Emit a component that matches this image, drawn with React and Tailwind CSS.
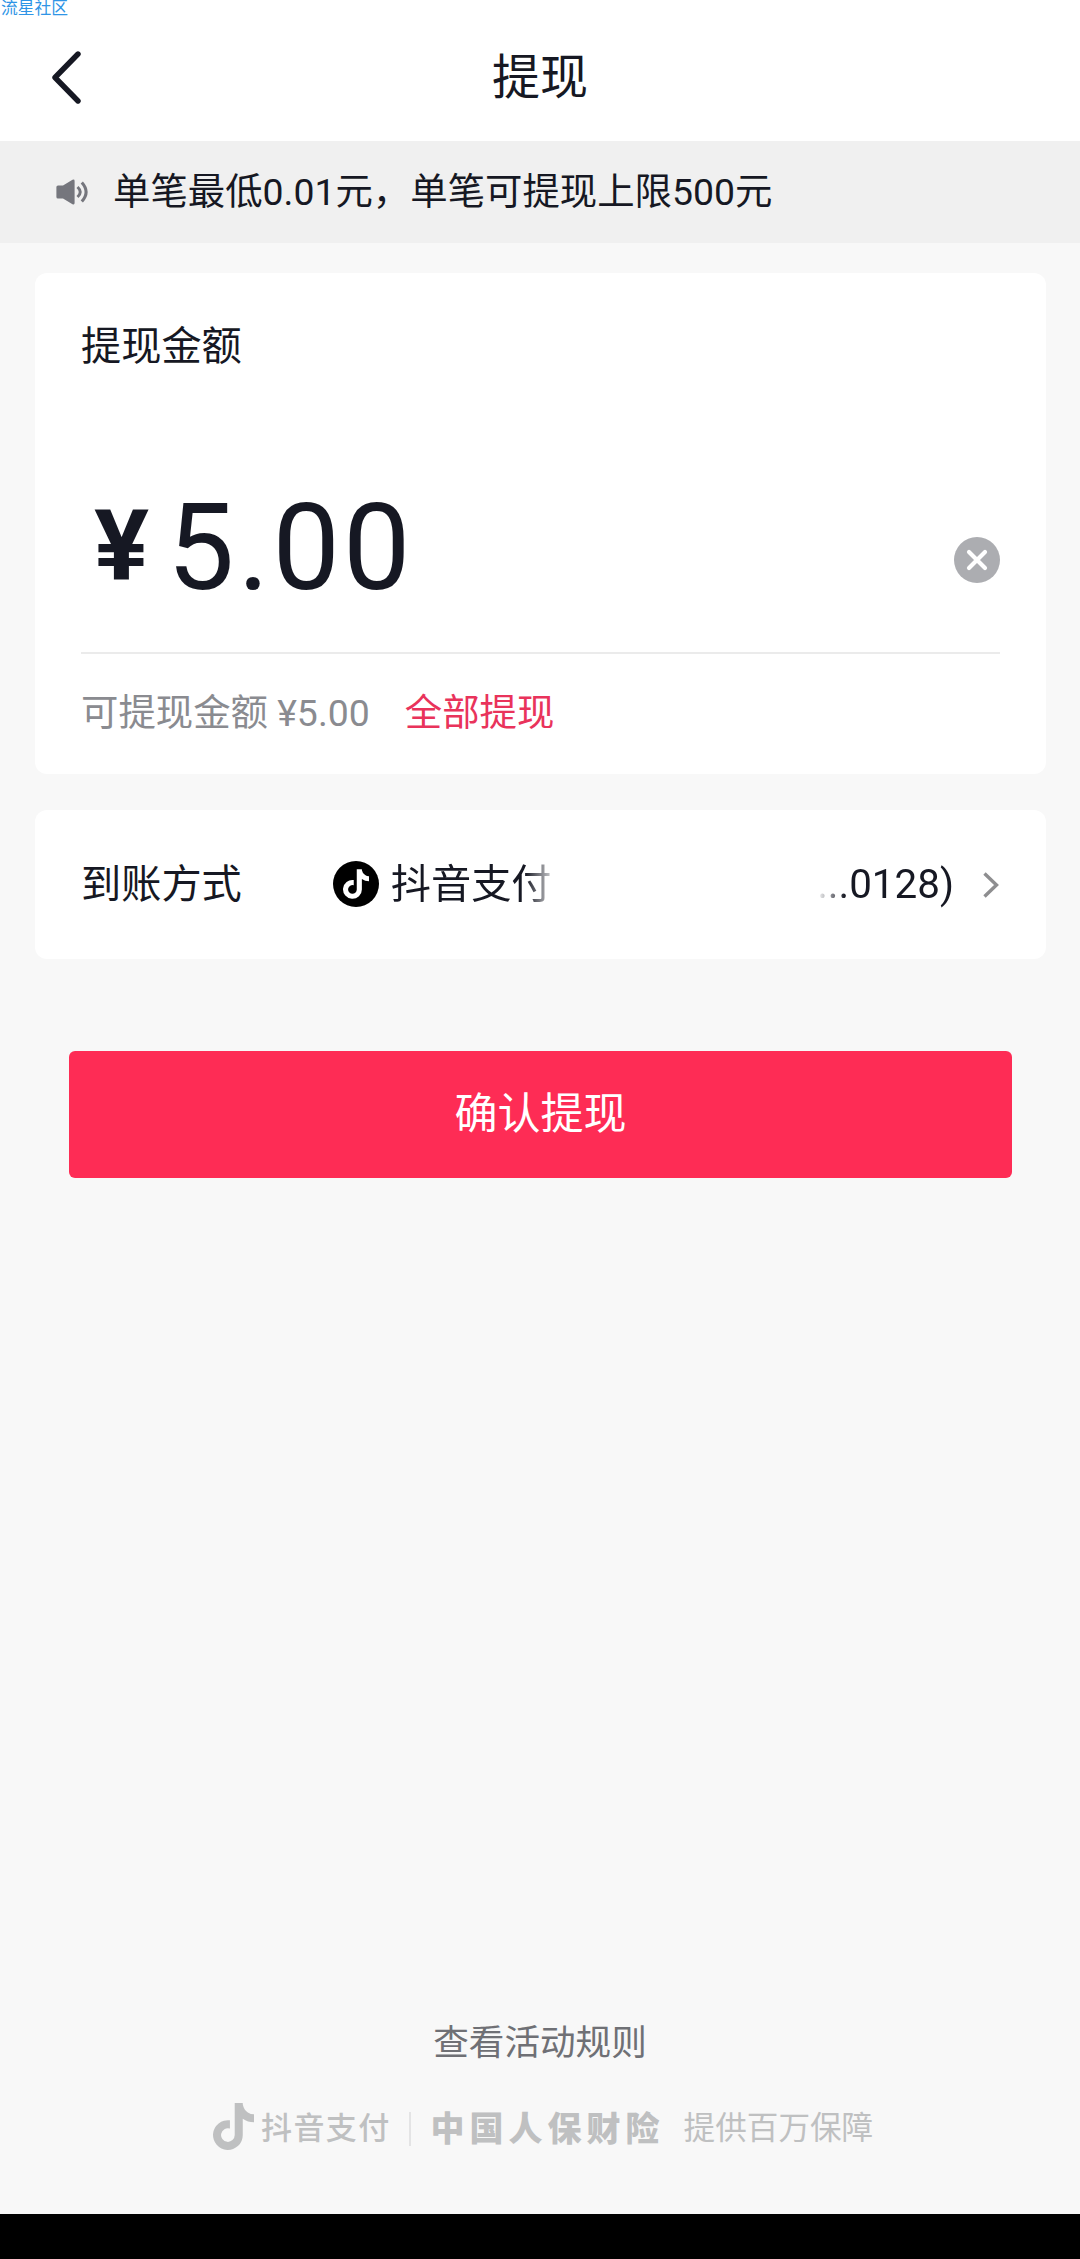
const NOTE_PATH =
  "M448,209.91a210.06,210.06,0,0,1-122.77-39.25V349.38A162.55,162.55,0,1,1,185,188.31V278.2a74.62,74.62,0,1,0,52.23,71.18V0l88,0a121.18,121.18,0,0,0,1.86,22.17h0A122.18,122.18,0,0,0,381,102.39a121.43,121.43,0,0,0,67,20.14Z";

const NoteIcon = ({ className }) => (
  <svg viewBox="0 0 448 512" fill="currentColor" className={className}>
    <path d={NOTE_PATH} />
  </svg>
);

const SpeakerIcon = () => (
  <svg width="32" height="26" viewBox="0 0 32 26" fill="none">
    <path
      d="M2 6.5H7L16.5 0.8Q18.6 0 18.6 2V24Q18.6 26 16.5 25.2L7 19.5H2Q0.4 19.5 0.4 18V8Q0.4 6.5 2 6.5Z"
      fill="#75767d"
    />
    <path
      d="M21.5 8Q27 13 21.5 18M25.8 3.4Q34.4 13 25.8 22.6"
      stroke="#75767d"
      strokeWidth="3"
    />
  </svg>
);

const Header = () => (
  <header className="flex h-[141px] items-center bg-white pl-[51px]">
    <button type="button" className="mt-[13px] w-8">
      <svg width="32" height="54" viewBox="0 0 32 54" fill="none">
        <path
          d="M27 4L4 27.500L27 51"
          stroke="#161823"
          strokeWidth="5.400"
          strokeLinecap="round"
          strokeLinejoin="round"
        />
      </svg>
    </button>
    <h1 className="mt-[14px] mr-[83px] flex-1 text-center text-[48px] leading-[64px]">
      提现
    </h1>
  </header>
);

const Notice = () => (
  <div className="flex h-[102px] items-center bg-[#f0f0f0] pl-14">
    <SpeakerIcon />
    <p className="ml-[25px] text-[37.4px] leading-[50px]">
      单笔最低0.01元，单笔可提现上限500元
    </p>
  </div>
);

const AmountCard = () => (
  <section className="mt-[30px] h-[501px] rounded-[12px] bg-white px-[46px] pt-[47px]">
    <h2 className="text-[40.2px] leading-[54px]">提现金额</h2>
    <div className="mt-[79px] flex h-[201px] items-start justify-between border-b-2 border-[#ebebeb]">
      <div className="flex items-baseline pl-[13px]">
        <span className="mr-[15px] w-[58px] origin-left -translate-y-[9px] scale-x-105 text-[98px] leading-[190px] font-bold">
          ¥
        </span>
        <span className="text-[120px] leading-[190px] tracking-[3.2px]">
          5.00
        </span>
      </div>
      <button type="button" className="mt-[84px]">
        <svg width="46" height="46" viewBox="0 0 46 46">
          <circle cx="23" cy="23" r="23" fill="#acadb1" />
          <path
            d="M15 15L31 31M31 15L15 31"
            stroke="#fff"
            strokeWidth="4.200"
            strokeLinecap="round"
          />
        </svg>
      </button>
    </div>
    <p className="mt-[34px] flex text-[37.4px] leading-[50px] text-[#8a8b90]">
      <span>可提现金额 ¥5.00</span>
      <span className="ml-[35px] text-[#e9335b]">全部提现</span>
    </p>
  </section>
);

const MethodCard = () => (
  <section className="mt-9 flex h-[149px] items-center rounded-[12px] bg-white pr-[47px] pl-[46px] text-[40.2px] leading-[54px]">
    <span>到账方式</span>
    <span className="mb-[2px] ml-[91px] flex h-[46px] w-[46px] items-center justify-center rounded-full bg-black text-white">
      <NoteIcon className="h-[30px] w-[26px]" />
    </span>
    <span className="ml-[12px] [mask-image:linear-gradient(to_right,#000_134px,transparent_168px)]">
      抖音支付
    </span>
    <span className="ml-auto text-[40.4px] [mask-image:linear-gradient(to_right,transparent,#000_28px)]">
      ...0128)
    </span>
    <svg
      width="16"
      height="26"
      viewBox="0 0 16 26"
      fill="none"
      className="ml-[29px]"
    >
      <path d="M1.500 1.500L13.500 13L1.500 24.500" stroke="#8e8e90" strokeWidth="3.400" />
    </svg>
  </section>
);

const Footer = () => (
  <footer className="mt-auto mb-[51px] flex flex-col items-center">
    <a href="#" className="text-[35.6px] leading-[48px] text-[#6f7075]">
      查看活动规则
    </a>
    <div className="mt-[22px] flex h-[74px] w-full items-center pl-[213px] leading-[44px] whitespace-nowrap text-[#bfc0c1]">
      <NoteIcon className="h-[47px] w-[41px]" />
      <span className="mt-[5px] ml-[7px] text-[31px] font-medium tracking-[1.4px]">
        抖音支付
      </span>
      <span className="mt-[5px] ml-[18px] h-[34px] w-[2px] bg-[#e4e4e5]" />
      <span className="mt-[5px] ml-[20px] text-[34px] font-black tracking-[5px]">
        中国人保财险
      </span>
      <span className="mt-[5px] ml-[19px] text-[31.6px]">提供百万保障</span>
    </div>
  </footer>
);

const App = () => {
  return (
    <div className="relative flex h-[2259px] w-[1080px] flex-col overflow-hidden bg-[#f8f8f8] font-['Roboto','Noto_Sans_CJK_SC',sans-serif] text-[#161823]">
      <span className="absolute top-0 left-[1px] text-[16.8px] leading-[17px] text-[#2f95e6]">
        流星社区
      </span>
      <Header />
      <Notice />
      <main className="mr-[34px] ml-[35px]">
        <AmountCard />
        <MethodCard />
        <button
          type="button"
          className="mt-[92px] ml-[34px] block h-[127px] w-[943px] rounded-[6px] bg-[#fe2c55] pb-[2px] text-[43px] leading-[58px] text-white"
        >
          确认提现
        </button>
      </main>
      <Footer />
      <div className="h-[45px] shrink-0 bg-black" />
    </div>
  );
};

export default App;
